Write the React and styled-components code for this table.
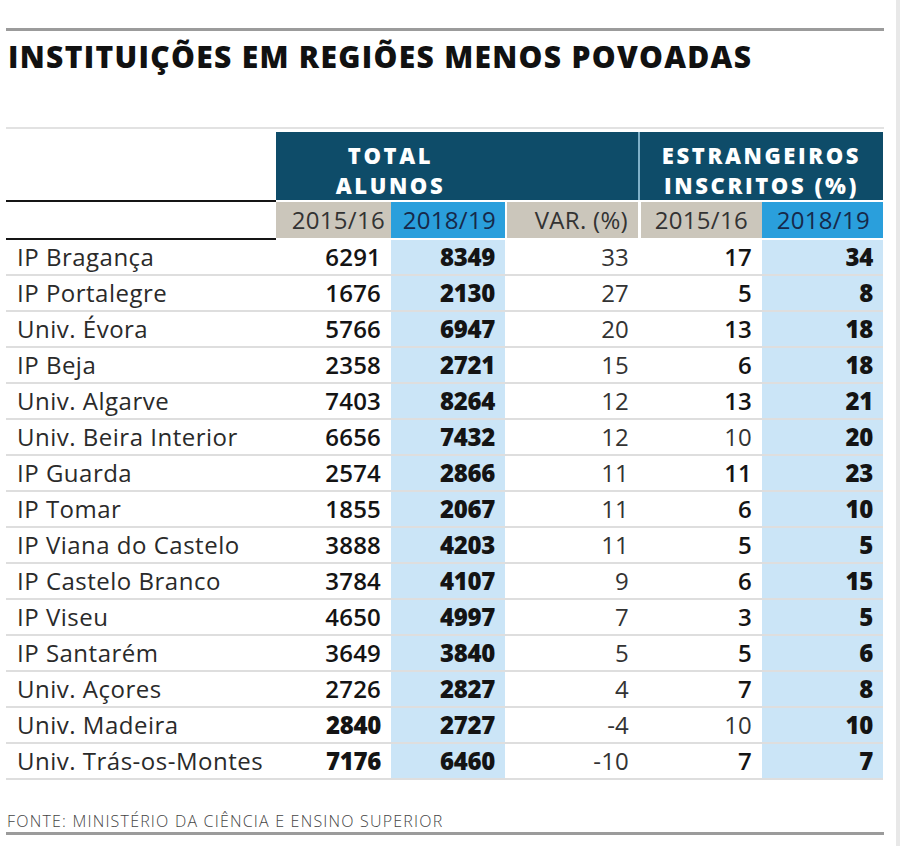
import React from "react";
import styled, { createGlobalStyle } from "styled-components";

const Global = createGlobalStyle`
  html, body { margin: 0; padding: 0; background: #fff; }
  body { font-family: "Open Sans", "Noto Sans", sans-serif; color: #222; }
`;

const Page = styled.div`
  box-sizing: border-box;
  width: 900px;
  height: 846px;
  padding: 28px 0 0 6px;
  border-right: 4px solid #e8e8e8;
  overflow: hidden;
`;

const Rule = styled.div`
  width: 878px;
  height: ${(p) => p.$h || 3}px;
  background: ${(p) => p.$color || "#9b9b9b"};
  margin-top: ${(p) => p.$mt || 0}px;
`;

const Title = styled.h1`
  margin: 8px 0 0 2px;
  font-family: "Open Sans", sans-serif;
  font-weight: 800;
  font-size: 30px;
  line-height: 36px;
  letter-spacing: 1.3px;
  color: #111;
  white-space: nowrap;
`;

const Table = styled.div`
  margin-top: 3px;
  width: 877px;
`;

const COLS = "270px 115px 114px 133px 124px 121px";

const HeadRow = styled.div`
  display: grid;
  grid-template-columns: ${COLS};
  height: ${(p) => p.$h}px;
`;

const BlankHead = styled.div`
  box-sizing: border-box;
  border-bottom: 2px solid #151515;
`;

const GroupHead = styled.div`
  grid-column: ${(p) => p.$span};
  height: 68px;
  box-sizing: border-box;
  padding-top: 8px;
  background: #0e4c69;
  color: #fff;
  display: flex;
  flex-direction: column;
  align-items: center;
  justify-content: flex-start;
  border-left: ${(p) => (p.$divider ? "2px solid #7fb0c8" : "none")};
`;

const GroupLine = styled.span`
  display: block;
  font-weight: 800;
  font-size: 22px;
  line-height: 30px;
  height: 30px;
  letter-spacing: 2.6px;
  white-space: nowrap;
`;

const SubHead = styled.div`
  height: 36px;
  box-sizing: border-box;
  background: ${(p) => (p.$blue ? "#2a9fdc" : "#cbc6bb")};
  color: ${(p) => (p.$blue ? "#16294a" : "#333")};
  border-left: ${(p) => (p.$gap ? `${p.$gap}px solid #fff` : "none")};
  font-size: 24px;
  line-height: 36px;
  letter-spacing: 0.3px;
  text-align: right;
  padding-right: ${(p) => p.$pr || 9}px;
  white-space: nowrap;
`;

const Row = styled.div`
  display: grid;
  grid-template-columns: ${COLS};
  height: 36px;
  box-sizing: border-box;
  border-bottom: 2px solid #dedede;
`;

const Name = styled.div`
  padding-left: 11px;
  font-size: 24px;
  line-height: 34px;
  letter-spacing: 0.5px;
  color: #2a2a2a;
  white-space: nowrap;
`;

const Num = styled.div`
  background: ${(p) => (p.$tint ? "#cbe5f7" : "transparent")};
  text-align: right;
  padding-right: ${(p) => p.$pr || 10}px;
  font-size: 24px;
  line-height: 34px;
  font-weight: ${(p) => p.$w};
  color: ${(p) => (p.$w >= 600 ? "#141414" : "#333")};
  letter-spacing: ${(p) => (p.$w >= 800 ? "-0.3px" : "0.2px")};
`;

const Footer = styled.div`
  margin-top: 33px;
  margin-left: 1px;
  font-size: 16px;
  line-height: 17px;
  font-weight: 300;
  color: #444;
  letter-spacing: 1.2px;
  white-space: nowrap;
`;

const data = [
  ["IP Bragança", 6291, 8349, 33, 17, 34],
  ["IP Portalegre", 1676, 2130, 27, 5, 8],
  ["Univ. Évora", 5766, 6947, 20, 13, 18],
  ["IP Beja", 2358, 2721, 15, 6, 18],
  ["Univ. Algarve", 7403, 8264, 12, 13, 21],
  ["Univ. Beira Interior", 6656, 7432, 12, 10, 20],
  ["IP Guarda", 2574, 2866, 11, 11, 23],
  ["IP Tomar", 1855, 2067, 11, 6, 10],
  ["IP Viana do Castelo", 3888, 4203, 11, 5, 5],
  ["IP Castelo Branco", 3784, 4107, 9, 6, 15],
  ["IP Viseu", 4650, 4997, 7, 3, 5],
  ["IP Santarém", 3649, 3840, 5, 5, 6],
  ["Univ. Açores", 2726, 2827, 4, 7, 8],
  ["Univ. Madeira", 2840, 2727, -4, 10, 10],
  ["Univ. Trás-os-Montes", 7176, 6460, -10, 7, 7],
];

export default function App() {
  return (
    <Page>
      <Global />
      <Rule $h={3} />
      <Title>INSTITUIÇÕES EM REGIÕES MENOS POVOADAS</Title>
      <Rule $h={2} $color="#e2e2e2" $mt={52} />
      <Table>
        <HeadRow $h={70}>
          <BlankHead />
          <GroupHead $span="2 / 4">
            <GroupLine>TOTAL</GroupLine>
            <GroupLine>ALUNOS</GroupLine>
          </GroupHead>
          <GroupHead $span="4 / 5" />
          <GroupHead $span="5 / 7" $divider>
            <GroupLine>ESTRANGEIROS</GroupLine>
            <GroupLine>INSCRITOS (%)</GroupLine>
          </GroupHead>
        </HeadRow>
        <HeadRow $h={38}>
          <BlankHead />
          <SubHead $pr={6}>2015/16</SubHead>
          <SubHead $blue>2018/19</SubHead>
          <SubHead $gap={2} $pr={10}>VAR. (%)</SubHead>
          <SubHead $gap={3} $pr={14}>2015/16</SubHead>
          <SubHead $blue $pr={13}>2018/19</SubHead>
        </HeadRow>
        {data.map(([name, a, b, v, c, d]) => (
          <Row key={name}>
            <Name>{name}</Name>
            <Num $w={a > b ? 800 : 600}>{a}</Num>
            <Num $w={800} $tint>{b}</Num>
            <Num $w={400} $pr={9}>{v}</Num>
            <Num $w={c === 10 ? 400 : 600}>{c}</Num>
            <Num $w={800} $tint>{d}</Num>
          </Row>
        ))}
      </Table>
      <Footer>FONTE: MINISTÉRIO DA CIÊNCIA E ENSINO SUPERIOR</Footer>
      <Rule $h={3} $mt={2} />
    </Page>
  );
}
